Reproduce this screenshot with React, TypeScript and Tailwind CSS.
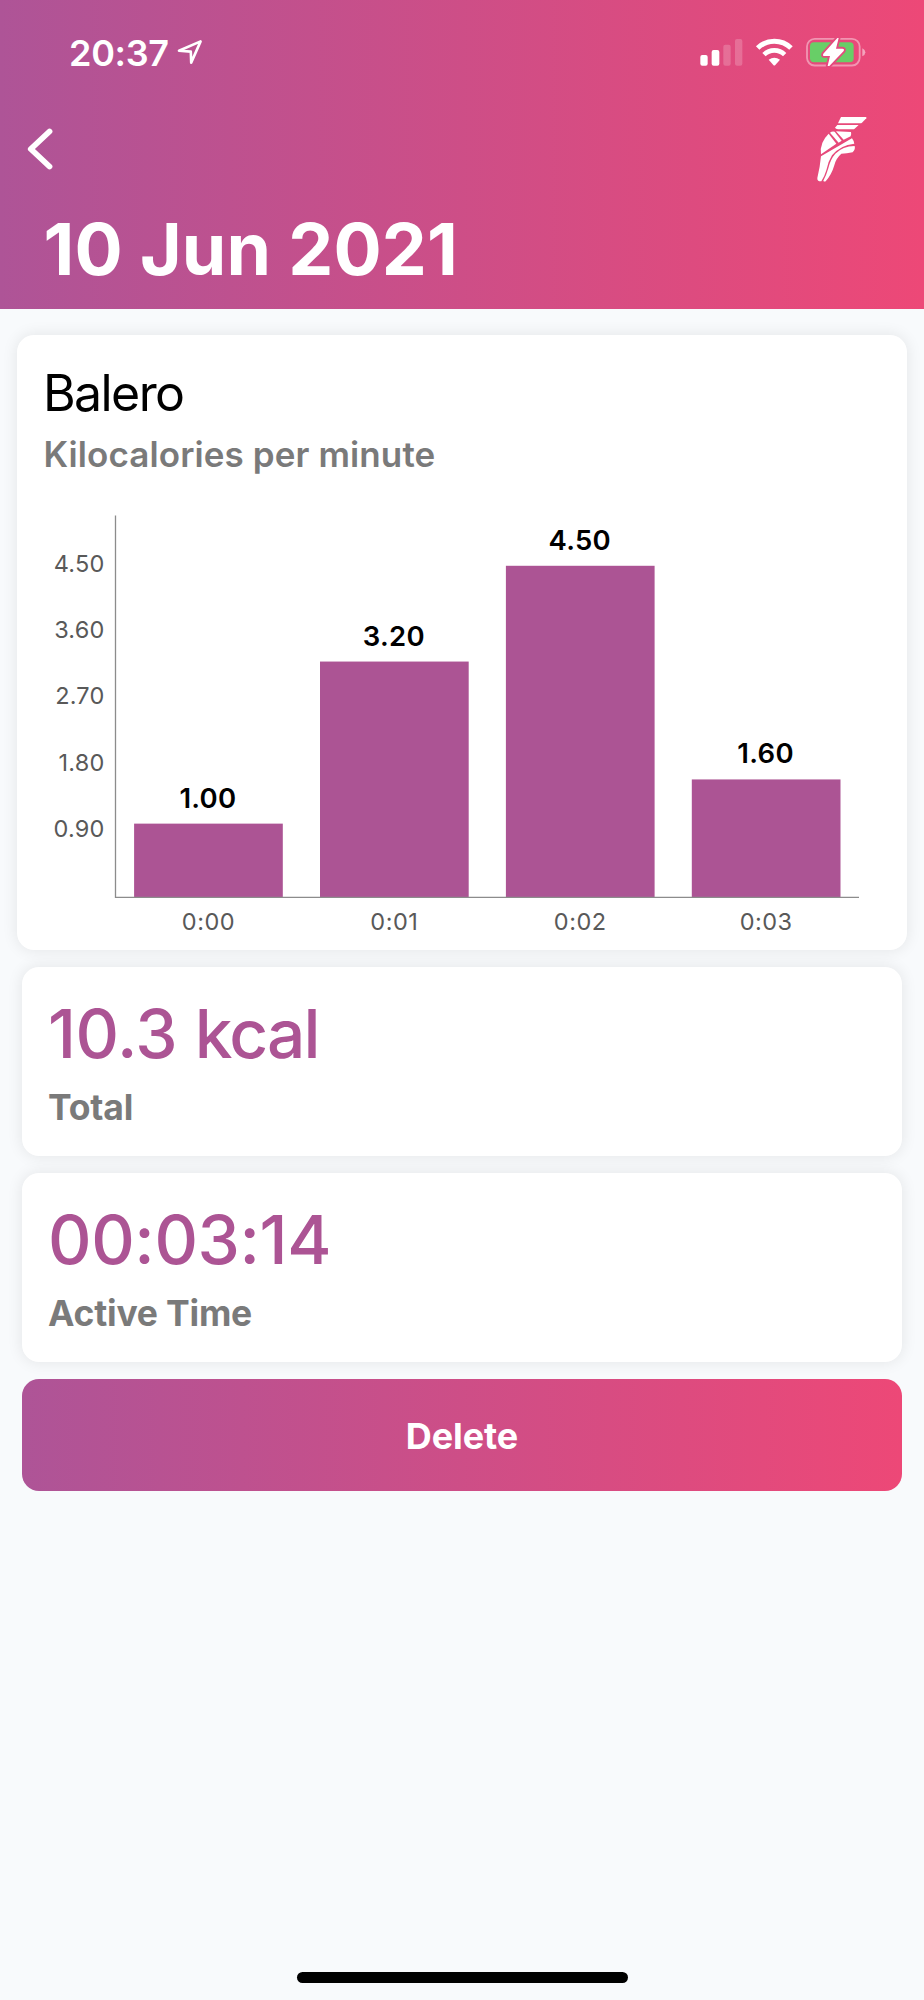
const bars = [
  { label: '0:00', value: 1.0 },
  { label: '0:01', value: 3.2 },
  { label: '0:02', value: 4.5 },
  { label: '0:03', value: 1.6 },
];

const ticks = [4.5, 3.6, 2.7, 1.8, 0.9];

// Chart geometry
const AXIS_X = 98.5;
const BASE_Y = 397.3;
const SLOT = 185.9;
const BAR_W = 148.7;
const SCALE = 73.67;

function LocationArrow() {
  return (
    <svg viewBox="0 0 26 27" className="w-[26px] h-[27px] ml-[8px] mt-[1px]" fill="none" stroke="white" strokeWidth="2.6" strokeLinejoin="round">
      <path d="M23.6 2.4 L2 11.8 L13.8 12.6 L14.2 23.6 Z" />
    </svg>
  );
}

function StatusIcons() {
  return (
    <svg viewBox="0 0 504 90" className="w-[168px] h-[30px]">
      {/* Signal */}
      <rect x="4" y="54" width="22" height="32" rx="6" fill="white" />
      <rect x="38" y="39" width="23" height="47" rx="6" fill="white" />
      <rect x="73" y="23" width="22" height="63" rx="6" fill="white" fillOpacity="0.2" />
      <rect x="108" y="6" width="22" height="80" rx="6" fill="white" fillOpacity="0.2" />
      {/* Wifi */}
      <g fill="none" stroke="white">
        <path d="M176 33 A72 72 0 0 1 276 33" strokeWidth="15" />
        <path d="M195 53 A44 44 0 0 1 257 53" strokeWidth="14" />
      </g>
      <path d="M209 68 Q226 56 243 68 L229 84 Q226 87 223 84 Z" fill="white" />
      {/* Battery */}
      <rect x="324" y="5.5" width="158" height="80" rx="23" fill="none" stroke="white" strokeOpacity="0.42" strokeWidth="5.5" />
      <path d="M490 34 Q499 38 499 46 Q499 54 490 58 Z" fill="white" fillOpacity="0.5" />
      <rect x="333" y="16" width="131" height="60" rx="12" fill="#68ce67" />
      <path d="M415 3 L373 50 Q370 57 376 57 L393 57 L386 87 L391 87 L434 42 Q437 35 430 35 L411 35 L419 3 Z" fill="white" stroke="#e44a7d" strokeWidth="11" strokeLinejoin="round" paintOrder="stroke" />
    </svg>
  );
}

function WingedFoot() {
  return (
    <svg viewBox="75 45 160 205" className="w-[53.3px] h-[68.3px]" fill="white">
      <path d="M153 51 H227 Q231 51 229 55 L216 68 Q214 70 210 70 H144 Z" />
      <path d="M142 75 H206 L194 86 Q192 88 188 88 H144 Q137 86 135 83 Z" />
      <path d="M138 94 L183 96 Q185 104 182 109 L161 119 Z" />
      <path d="M120 98 Q126 93 134 95 L155 122 L146 128 Z" />
      <path d="M116 101 L139 131 L93 163 Q88 128 116 101 Z" />
      <path d="M93 169 L186 115 Q191 121 193 131 Q151 135 126 166 Q113 187 109 211 Q103 231 94 244 Q81 245 82 234 Q90 202 93 169 Z" />
      <path d="M194 138 Q197 148 188 157 Q170 161 154 161 Q137 176 133 196 Q125 224 107 244 Q102 246 100 242 Q109 226 115 205 Q121 178 136 161 Q158 139 194 138 Z" />
    </svg>
  );
}

function Chart() {
  return (
    <svg viewBox="0 0 890 450" className="block w-[890px] h-[450px]">
      {ticks.map((t, i) => (
        <text key={t} x="87.5" y={71.6 + i * 66.4} textAnchor="end" fill="#595959" className="text-[23.5px] tracking-[0.2px]">
          {t.toFixed(2)}
        </text>
      ))}
      {bars.map((b, i) => {
        const x = AXIS_X + 18.6 + i * SLOT;
        const y = BASE_Y - b.value * SCALE;
        return (
          <g key={b.label} textAnchor="middle">
            <rect x={x} y={y} width={BAR_W} height={BASE_Y - y} fill="#ac5494" />
            <text x={x + BAR_W / 2 - 0.5} y={y - 16} fill="black" className="text-[27.5px] font-semibold tracking-[0.3px]">
              {b.value.toFixed(2)}
            </text>
            <text x={x + BAR_W / 2} y="429.6" fill="#595959" className="text-[23.5px] tracking-[0.5px]">
              {b.label}
            </text>
          </g>
        );
      })}
      <path d={`M${AXIS_X} 15.5 V${BASE_Y} H842`} fill="none" stroke="#8c8c8c" strokeWidth="1.3" />
    </svg>
  );
}

function StatCard({ children, label }: { children: React.ReactNode; label: string }) {
  return (
    <div className="mx-[5px] h-[188.5px] rounded-[17px] bg-white px-[26px] pt-[25px] shadow-[0_0_16px_rgba(0,0,0,0.09)]">
      <div className="text-[67.5px] leading-[84px] font-medium text-[#ac5494] tracking-[-0.4px]">{children}</div>
      <div className="mt-[10px] text-[35.5px] leading-[44px] font-bold text-[#7a7a7a] tracking-[-0.2px]">{label}</div>
    </div>
  );
}

export default function App() {
  return (
    <div className="w-[924px] h-[2000px] flex flex-col bg-[#f8fafc] overflow-hidden font-['Inter',sans-serif]">
      {/* Header */}
      <header className="h-[309px] shrink-0 bg-linear-to-r/srgb from-[#ae5497] to-[#ed4877] text-white">
        <div className="flex items-center justify-between h-[104px] pl-[69px] pr-[57px]">
          <div className="flex items-center">
            <span className="text-[36px] leading-[44px] pt-px font-semibold tracking-[-0.3px]">20:37</span>
            <LocationArrow />
          </div>
          <StatusIcons />
        </div>
        <div className="flex items-center justify-between h-[90px] pl-[26px] pr-[56px]">
          <svg viewBox="0 0 28 44" className="w-[28px] h-[44px]" fill="none" stroke="white" strokeWidth="5.8" strokeLinecap="round" strokeLinejoin="round">
            <path d="M23.5 4.5 L4.8 22 L23.5 39.5" />
          </svg>
          <WingedFoot />
        </div>
        <h1 className="pl-[43.5px] pt-[10.5px] text-[71.5px] leading-[88px] font-bold tracking-[0.15px]">10 Jun 2021</h1>
      </header>

      <main className="flex flex-col gap-[17.5px] px-[17px] pt-[26px]">
        <section className="h-[614.5px] rounded-[17px] bg-white shadow-[0_0_16px_rgba(0,0,0,0.09)]">
          <h2 className="pl-[26px] pt-[28px] text-[50px] leading-[60px] tracking-[-1.6px] text-black">Balero</h2>
          <p className="pl-[26.5px] pt-[9px] text-[35px] leading-[44px] font-semibold text-[#7a7a7a] tracking-[0.1px]">Kilocalories per minute</p>
          <div className="pt-[24px]">
            <Chart />
          </div>
        </section>

        <StatCard label="Total">
          10.3 <span className="tracking-[-1.8px]">kcal</span>
        </StatCard>
        <StatCard label="Active Time">00:03:14</StatCard>

        <button className="mx-[5px] h-[112px] rounded-[17px] bg-linear-to-r/srgb from-[#ae5497] to-[#ed4877] pt-[2px] text-white text-[36px] font-bold tracking-[-0.1px]">
          Delete
        </button>
      </main>

      {/* Home indicator */}
      <div className="mt-auto mb-[17px] mx-auto w-[331px] h-[11px] rounded-full bg-black" />
    </div>
  );
}
